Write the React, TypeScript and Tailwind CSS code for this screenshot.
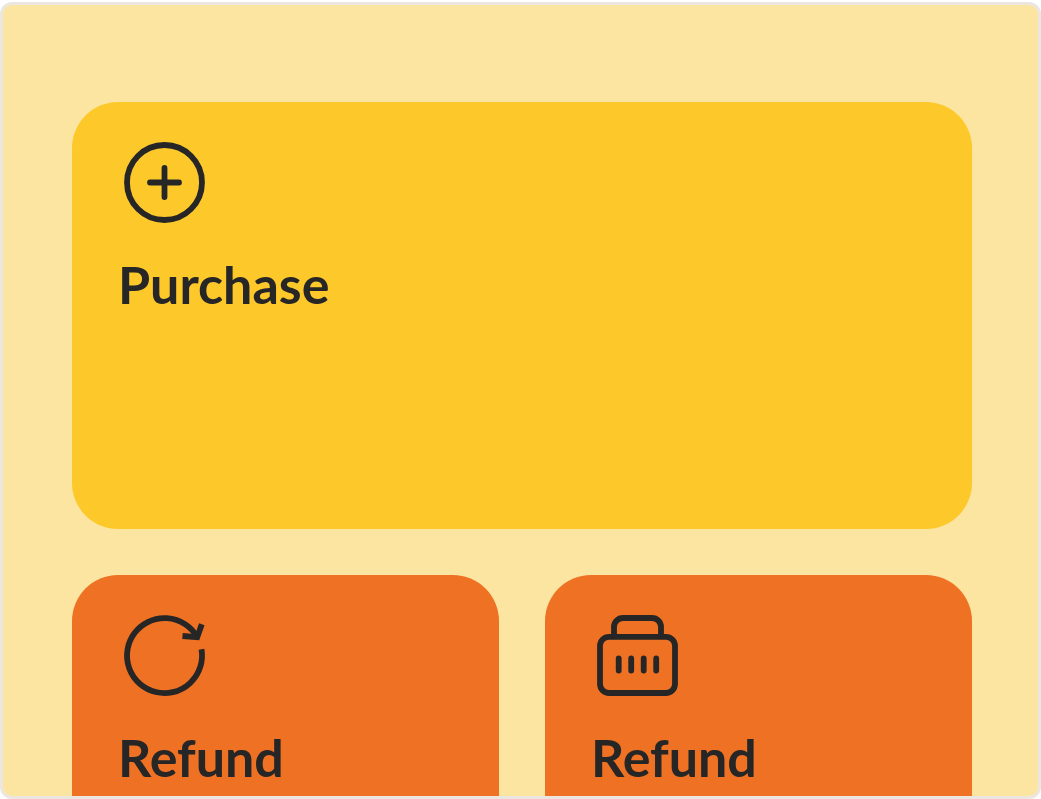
import type { ReactNode } from "react";

function PlusCircleIcon() {
  return (
    <svg viewBox="0 0 93 93" className="size-[93px]" fill="none" stroke="currentColor" strokeWidth="5.8" aria-hidden="true">
      <circle cx="46.5" cy="46.5" r="37.5" />
      <path d="M46.5 32v29M32 46.5h29" strokeLinecap="round" />
    </svg>
  );
}

function RefreshIcon() {
  return (
    <svg viewBox="0 0 93 93" className="size-[93px]" fill="none" stroke="currentColor" strokeWidth="5.8" aria-hidden="true">
      <path d="M83.5 40.3A37.5 37.5 0 1 1 79.100 28" />
      <path d="M64.5 27L79.200 28.200L83.800 15.200" />
    </svg>
  );
}

function TerminalIcon() {
  return (
    <svg viewBox="0 0 93 93" className="size-[93px]" fill="none" stroke="currentColor" strokeWidth="5.8" aria-hidden="true">
      <rect x="9" y="27.8" width="75" height="56.2" rx="9" />
      <path d="M23 27.8V18a9 9 0 0 1 9-9h29a9 9 0 0 1 9 9v9.8" />
      <path d="M27.7 49.5v12M40.2 49.5v12M52.7 49.5v12M65.2 49.5v12" strokeLinecap="round" />
    </svg>
  );
}

function Card({ label, icon, className }: { label: string; icon: ReactNode; className: string }) {
  return (
    <button
      type="button"
      className={`flex h-[427px] flex-col items-start gap-6 rounded-[46px] px-[46px] pt-[34px] text-left ${className}`}
    >
      {icon}
      <span className="text-[52px] leading-[62px] font-bold">{label}</span>
    </button>
  );
}

export default function App() {
  return (
    <div className="h-screen overflow-hidden bg-white pt-0.5 font-['Lato',sans-serif] text-[#262626]">
      <main className="h-full overflow-hidden rounded-xl border-3 border-[#ebe7e0] bg-[#fce5a0] pt-[97px] pr-[66px] pl-[69px]">
        <div className="grid grid-cols-2 gap-[46px]">
          <Card label="Purchase" icon={<PlusCircleIcon />} className="col-span-2 bg-[#fdc82a]" />
          <Card label="Refund" icon={<RefreshIcon />} className="bg-[#ef7123]" />
          <Card label="Refund" icon={<TerminalIcon />} className="bg-[#ef7123]" />
        </div>
      </main>
    </div>
  );
}
